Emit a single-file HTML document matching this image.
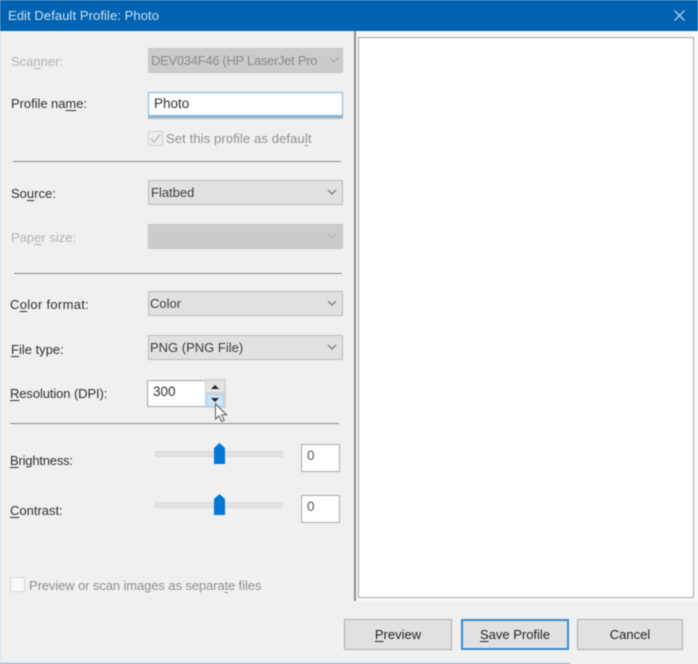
<!DOCTYPE html>
<html><head><meta charset="utf-8"><style>
html,body{margin:0;padding:0}
body{width:698px;height:664px;overflow:hidden;background:#f0f0f0;position:relative;font-family:"Liberation Sans",sans-serif;font-size:13px;color:#2e2e2e}
div,svg{position:absolute;box-sizing:border-box}
#w{left:0;top:0;width:698px;height:664px;background:#f0f0f0;filter:blur(.45px)}
.t{white-space:nowrap;line-height:16px}
.d{color:#b4b4b4}
.g{color:#8f8f8f}
.s{left:148px;width:195px;height:25px;background:#e1e1e1;border:1px solid #bcbcbc}
.off{background:#cbcbcb;border-color:#c6c6c6}
.sep{height:1px;background:#8a8a8a}
.b{top:619px;height:31px;background:#e1e1e1;border:1px solid #adadad;text-align:center;line-height:30px;font-size:13px;color:#222}
.i{background:#fff;border:1px solid #a5a5a5}
u{text-underline-offset:2px}
</style></head><body><div id="w">
<div style="left:0;top:0;width:698px;height:31px;background:#0063b1"></div>
<div class="t" style="left:8px;top:8px;color:#cfe0f0;font-size:13px;letter-spacing:.08px">Edit Default Profile: Photo</div>
<svg style="left:673px;top:9px" width="13" height="13" viewBox="0 0 13 13"><path d="M1.5 1.5L11.5 11.5M11.5 1.5L1.5 11.5" stroke="#a9c9e6" stroke-width="1.4" fill="none"/></svg>
<div style="left:0;top:31px;width:1px;height:633px;background:#cfe0ee"></div>
<div style="left:0;top:663px;width:570px;height:1px;background:#7fa9cd"></div>

<div class="t d" style="left:11px;top:54px">Sca<u>n</u>ner:</div>
<div class="s off" style="top:48px"></div>
<div class="t" style="left:151px;top:53px;color:#8a8a8a;letter-spacing:-.3px">DEV034F46 (HP LaserJet Pro</div>
<div style="left:320px;top:53px;width:1px;height:14px;background:#d8c8b8"></div>
<svg style="left:329px;top:56px" width="10" height="8"><path d="M1 2L5 6L9 2" stroke="#a8a8a8" fill="none" stroke-width="1.1"/></svg>

<div class="t" style="left:11px;top:96px;letter-spacing:-.05px">Profile na<u>m</u>e:</div>
<div style="left:148px;top:92px;width:195px;height:25px;background:#fff;border:1px solid #79b4e4;border-bottom:2px solid #79b4e4"></div>
<div style="left:148px;top:117px;width:195px;height:2px;background:#b8b8b8"></div>
<div class="t" style="left:154px;top:96px;font-size:13.5px">Photo</div>
<div style="left:148px;top:131px;width:15px;height:15px;border:1px solid #d0d0d0;background:#eee"></div>
<svg style="left:149px;top:132px" width="13" height="13"><path d="M2 6.5L5 10L11 2.5" stroke="#b8b8b8" fill="none" stroke-width="1.3"/></svg>
<div class="t g" style="left:166px;top:131px;letter-spacing:.12px">Set this profile as defau<u>l</u>t</div>

<div class="sep" style="left:13px;top:161px;width:328px"></div>

<div class="t" style="left:11px;top:186px">So<u>u</u>rce:</div>
<div class="s" style="top:180px"></div>
<div class="t" style="left:151px;top:185px;color:#3c3c3c">Flatbed</div>
<svg style="left:327px;top:188px" width="10" height="8"><path d="M1 2L5 6L9 2" stroke="#666" fill="none" stroke-width="1.1"/></svg>

<div class="t d" style="left:11px;top:230px">Pap<u>e</u>r size:</div>
<div class="s off" style="top:224px"></div>
<svg style="left:327px;top:232px" width="10" height="8"><path d="M1 2L5 6L9 2" stroke="#b4b4b4" fill="none" stroke-width="1.1"/></svg>

<div class="sep" style="left:14px;top:273px;width:328px"></div>

<div class="t" style="left:10px;top:297px;letter-spacing:.3px">C<u>o</u>lor format:</div>
<div class="s" style="top:291px"></div>
<div class="t" style="left:150px;top:296px;color:#3c3c3c">Color</div>
<svg style="left:327px;top:299px" width="10" height="8"><path d="M1 2L5 6L9 2" stroke="#666" fill="none" stroke-width="1.1"/></svg>

<div class="t" style="left:11px;top:342px"><u>F</u>ile type:</div>
<div class="s" style="top:335px"></div>
<div class="t" style="left:150px;top:340px;color:#3c3c3c">PNG (PNG File)</div>
<svg style="left:327px;top:343px" width="10" height="8"><path d="M1 2L5 6L9 2" stroke="#666" fill="none" stroke-width="1.1"/></svg>

<div class="t" style="left:10px;top:386px;letter-spacing:-.1px"><u>R</u>esolution (DPI):</div>
<div class="i" style="left:147px;top:380px;width:59px;height:27px"></div>
<div class="t" style="left:153px;top:384px;font-size:13.5px">300</div>
<div style="left:205px;top:379px;width:21px;height:29px;background:#d4d4d4"></div>
<div style="left:206px;top:381px;width:18px;height:11px;background:#e4e4e4"></div>
<div style="left:206px;top:394px;width:18px;height:13px;background:#cde4f7;border:1px solid #a8d0ef"></div>
<svg style="left:206px;top:381px" width="18" height="26"><path d="M9 4L13 8H5Z M5 17H13L9 21Z" fill="#222"/></svg>
<svg style="left:214px;top:403px" width="16" height="22"><path d="M1.5 1V16L5 12.8L7.6 18.5L10.2 17.3L7.7 11.8H12.5Z" fill="#fff" stroke="#555" stroke-width="1"/></svg>

<div class="sep" style="left:10px;top:423px;width:329px"></div>

<div class="t" style="left:10px;top:453px;letter-spacing:-.2px"><u>B</u>rightness:</div>
<div style="left:155px;top:451px;width:128px;height:6px;background:#e3e3e3;border:1px solid #dadada"></div>
<svg style="left:213px;top:442px" width="13" height="23"><path d="M1 6L6.5 1L12 6V22H1Z" fill="#0078d7"/></svg>
<div class="i" style="left:301px;top:444px;width:39px;height:28px;border-color:#aaa;border-width:1.5px"></div>
<div class="t" style="left:307px;top:448px;color:#555;font-size:13.5px">0</div>

<div class="t" style="left:10px;top:503px"><u>C</u>ontrast:</div>
<div style="left:155px;top:502px;width:128px;height:6px;background:#e3e3e3;border:1px solid #dadada"></div>
<svg style="left:213px;top:493px" width="13" height="23"><path d="M1 6L6.5 1L12 6V22H1Z" fill="#0078d7"/></svg>
<div class="i" style="left:301px;top:495px;width:39px;height:28px;border-color:#aaa;border-width:1.5px"></div>
<div class="t" style="left:307px;top:499px;color:#555;font-size:13.5px">0</div>

<div style="left:10px;top:577px;width:15px;height:15px;background:#fafafa;border:1px solid #d6d6d6"></div>
<div class="t g" style="left:29px;top:578px;letter-spacing:-.1px">Preview or scan images as separa<u>t</u>e files</div>

<div style="left:354px;top:31px;width:2px;height:570px;background:#8c8c8c"></div>
<div style="left:356px;top:31px;width:342px;height:570px;background:#f7f7f7"></div>
<div style="left:358px;top:37px;width:336px;height:561px;background:#fff;border:1px solid #a5a5a5"></div>
<div style="left:696px;top:33px;width:1px;height:568px;background:#fff"></div>

<div class="b" style="left:344px;width:108px"><u>P</u>review</div>
<div class="b" style="left:461px;width:108px;border:2px solid #3a8ad0;line-height:28px"><u>S</u>ave Profile</div>
<div class="b" style="left:577px;width:106px">Cancel</div>
</div></body></html>
